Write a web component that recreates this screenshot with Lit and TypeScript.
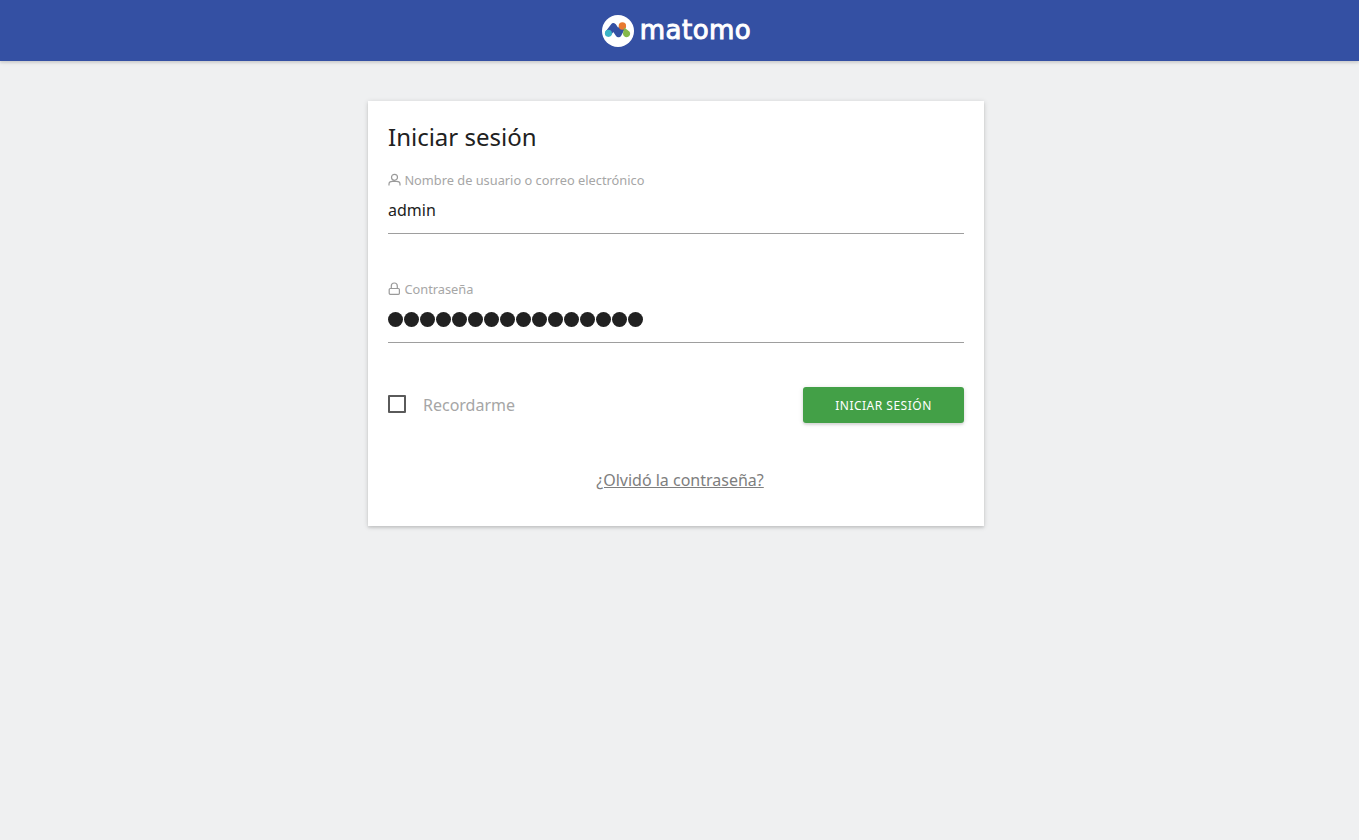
import { LitElement, html, css } from "lit";
import { customElement } from "lit/decorators.js";

@customElement("app-root")
export class AppRoot extends LitElement {
  static styles = css`
    :host {
      display: block;
      min-height: 840px;
      background: #eff0f1;
      font-family: "Noto Sans", sans-serif;
      color: #212121;
    }
    .nav {
      height: 61px;
      background: #3450a3;
      box-shadow: 0 2px 2px 0 rgba(0, 0, 0, 0.08), 0 1px 5px 0 rgba(0, 0, 0, 0.1);
      display: flex;
      align-items: center;
      justify-content: center;
      gap: 6px;
      padding-right: 6px;
      box-sizing: border-box;
    }
    .logo-mark { width: 32px; height: 32px; display: block; }
    .wordmark {
      font-family: "DejaVu Sans", sans-serif;
      font-weight: 400;
      font-size: 26px;
      line-height: 30px;
      padding-bottom: 2px;
      color: #fff;
      letter-spacing: 0.45px;
      -webkit-text-stroke: 1px #fff;
    }
    .card {
      width: 616px;
      height: 425px;
      box-sizing: border-box;
      margin: 40px 0 0 368px;
      padding: 20px;
      background: #fff;
      box-shadow: 0 2px 2px 0 rgba(0, 0, 0, 0.08), 0 1px 5px 0 rgba(0, 0, 0, 0.16);
      display: flex;
      flex-direction: column;
    }
    h2 {
      margin: 0;
      font-size: 24px;
      line-height: 32px;
      font-weight: 400;
    }
    .field { display: flex; flex-direction: column; }
    .field.first { margin-top: 18px; }
    .field.second { margin-top: 46px; }
    .label {
      display: flex;
      align-items: center;
      gap: 3.4px;
      height: 18px;
      font-size: 12.8px;
      line-height: 18px;
      color: #a6a6a6;
    }
    .label svg { width: 13px; height: 14px; display: block; }
    .value {
      height: 45px;
      box-sizing: border-box;
      border-bottom: 1px solid #9e9e9e;
      font-size: 16px;
      padding-bottom: 2px;
      display: flex;
      align-items: center;
    }
    .dots { display: flex; gap: 1px; }
    .dot { width: 15px; height: 15px; border-radius: 50%; background: #212121; }
    .row {
      margin-top: 44px;
      display: flex;
      justify-content: space-between;
      align-items: center;
      height: 36px;
    }
    .remember { display: flex; align-items: center; gap: 17px; color: #a6a6a6; font-size: 16px; }
    .box { width: 18px; height: 18px; box-sizing: border-box; border: 2px solid #5a5a5a; border-radius: 1px; margin-bottom: 2px; }
    .btn {
      width: 161px;
      height: 36px;
      border-radius: 3px;
      background: #43a047;
      color: #fff;
      font-size: 12px;
      letter-spacing: 0.5px;
      display: flex;
      align-items: center;
      justify-content: center;
      box-shadow: 0 2px 2px 0 rgba(0, 0, 0, 0.08), 0 1px 5px 0 rgba(0, 0, 0, 0.14);
    }
    .forgot-row { margin-top: 45px; display: flex; justify-content: center; padding-left: 8px; }
    .forgot { color: #7e7e7e; font-size: 16px; line-height: 24px; text-decoration: underline; }
  `;

  render() {
    return html`
      <div class="nav">
        <svg class="logo-mark" viewBox="0 0 32 32">
          <circle cx="16" cy="16" r="16" fill="#fff"></circle>
          <path d="M6.5 18 L11.5 11.5 L16.5 19 L20.3 12" fill="none" stroke="#3450a3" stroke-width="6.4" stroke-linecap="round" stroke-linejoin="round"></path>
          <circle cx="6.4" cy="18.2" r="3.5" fill="#3ab4c6"></circle>
          <circle cx="20.4" cy="11" r="3.7" fill="#e8792f"></circle>
          <path d="M22.2 12.6 L27.4 16.4 A3.6 3.6 0 1 1 21 18.2 Z" fill="#86b84a"></path>
        </svg>
        <span class="wordmark">matomo</span>
      </div>
      <div class="card">
        <h2>Iniciar sesión</h2>
        <div class="field first">
          <div class="label">
            <svg viewBox="0 0 13 14" fill="none" stroke="#9a9a9a" stroke-width="1.2">
              <circle cx="6.5" cy="4.3" r="3"></circle>
              <path d="M1 12.6 V11 C1 9.3 2.8 8.4 4.5 8.4 H8.5 C10.2 8.4 12 9.3 12 11 V12.6"></path>
            </svg>
            Nombre de usuario o correo electrónico
          </div>
          <div class="value">admin</div>
        </div>
        <div class="field second">
          <div class="label">
            <svg viewBox="0 0 13 14" fill="none" stroke="#9a9a9a" stroke-width="1.2">
              <rect x="1.2" y="6.5" width="10.2" height="5.8" rx="1"></rect>
              <path d="M3.3 6.5 V4 A3 3 0 0 1 9.3 4 V6.5"></path>
            </svg>
            Contraseña
          </div>
          <div class="value">
            <div class="dots">
              ${Array.from({ length: 16 }, () => html`<span class="dot"></span>`)}
            </div>
          </div>
        </div>
        <div class="row">
          <div class="remember"><span class="box"></span>Recordarme</div>
          <div class="btn">INICIAR SESIÓN</div>
        </div>
        <div class="forgot-row"><span class="forgot">¿Olvidó la contraseña?</span></div>
      </div>
    `;
  }
}
